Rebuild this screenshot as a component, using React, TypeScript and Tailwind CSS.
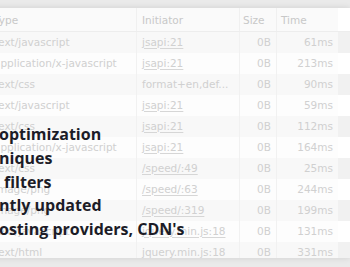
import React from "react"

type Row = { type: string; initiator: string; link: boolean; time: string }

const rows: Row[] = [
  { type: "text/javascript", initiator: "jsapi:21", link: true, time: "61ms" },
  { type: "application/x-javascript", initiator: "jsapi:21", link: true, time: "213ms" },
  { type: "text/css", initiator: "format+en,def...", link: false, time: "90ms" },
  { type: "text/javascript", initiator: "jsapi:21", link: true, time: "59ms" },
  { type: "text/css", initiator: "jsapi:21", link: true, time: "112ms" },
  { type: "application/x-javascript", initiator: "jsapi:21", link: true, time: "164ms" },
  { type: "text/css", initiator: "/speed/:49", link: true, time: "25ms" },
  { type: "image/png", initiator: "/speed/:63", link: true, time: "244ms" },
  { type: "image/png", initiator: "/speed/:319", link: true, time: "199ms" },
  { type: "text/javascript", initiator: "jquery.min.js:18", link: true, time: "131ms" },
  { type: "text/html", initiator: "jquery.min.js:18", link: true, time: "331ms" },
]

const cols = "grid grid-cols-[148px_103px_37px_61px_12px]"

const caption = [
  { text: "optimization", indent: "w-0" },
  { text: "niques", indent: "w-0" },
  { text: "filters", indent: "w-[5px]" },
  { text: "ntly updated", indent: "w-0" },
  { text: "osting providers, CDN's", indent: "w-0" },
]

export default function App() {
  return (
    <div className="relative w-[350px] h-[267px] overflow-hidden bg-[#eaeaea] font-['DejaVu_Sans',sans-serif]">
      <div className="pt-[8px]">
        {/* faded network table */}
        <div className="-ml-[11px] w-[361px] h-[250px] overflow-hidden bg-[#fbfbfb] shadow-[0_0_6px_rgba(0,0,0,0.12)] text-[10.5px] text-[#d0d0d0]">
          <div className={`${cols} h-[24px] border-b border-[#ededed] bg-[#fafafa] text-[#c8c8c8]`}>
            <div className="flex items-center pt-[2px] px-[5px] border-r border-[#f0f0f0]">Type</div>
            <div className="flex items-center pt-[2px] px-[5px] border-r border-[#f0f0f0]">Initiator</div>
            <div className="flex items-center pt-[2px] px-[3px] border-r border-[#f0f0f0]">Size</div>
            <div className="flex items-center pt-[2px] px-[4px]">Time</div>
            <div className="bg-white" />
          </div>
          {rows.map((r, i) => (
            <div
              key={i}
              className={`${cols} h-[21px] ${i % 2 === 0 ? "bg-[#f8f8f8]" : "bg-[#fdfdfd]"}`}
            >
              <div className="flex items-center px-[5px] border-r border-[#f1f1f1] whitespace-nowrap overflow-hidden">
                {r.type}
              </div>
              <div className="flex items-center px-[5px] border-r border-[#f1f1f1] whitespace-nowrap overflow-hidden">
                <span className={r.link ? "underline underline-offset-2 decoration-[#d6d6d6]" : ""}>
                  {r.initiator}
                </span>
              </div>
              <div className="flex items-center justify-end px-[5px] border-r border-[#f1f1f1]">0B</div>
              <div className="flex items-center justify-end px-[5px]">{r.time}</div>
              <div className={i % 2 === 0 ? "bg-[#f1f1f1]" : "bg-white"} />
            </div>
          ))}
        </div>
      </div>

      {/* bold caption lying over the table */}
      <div className="absolute left-0 top-[123px] flex flex-col font-['Open_Sans',sans-serif] font-bold text-[16px] leading-[23.8px] text-[#1c1c27] whitespace-nowrap">
        {caption.map((c) => (
          <div key={c.text} className="flex">
            <span className={`shrink-0 ${c.indent}`} />
            <span className="-ml-[1px]">{c.text}</span>
          </div>
        ))}
      </div>
    </div>
  )
}
